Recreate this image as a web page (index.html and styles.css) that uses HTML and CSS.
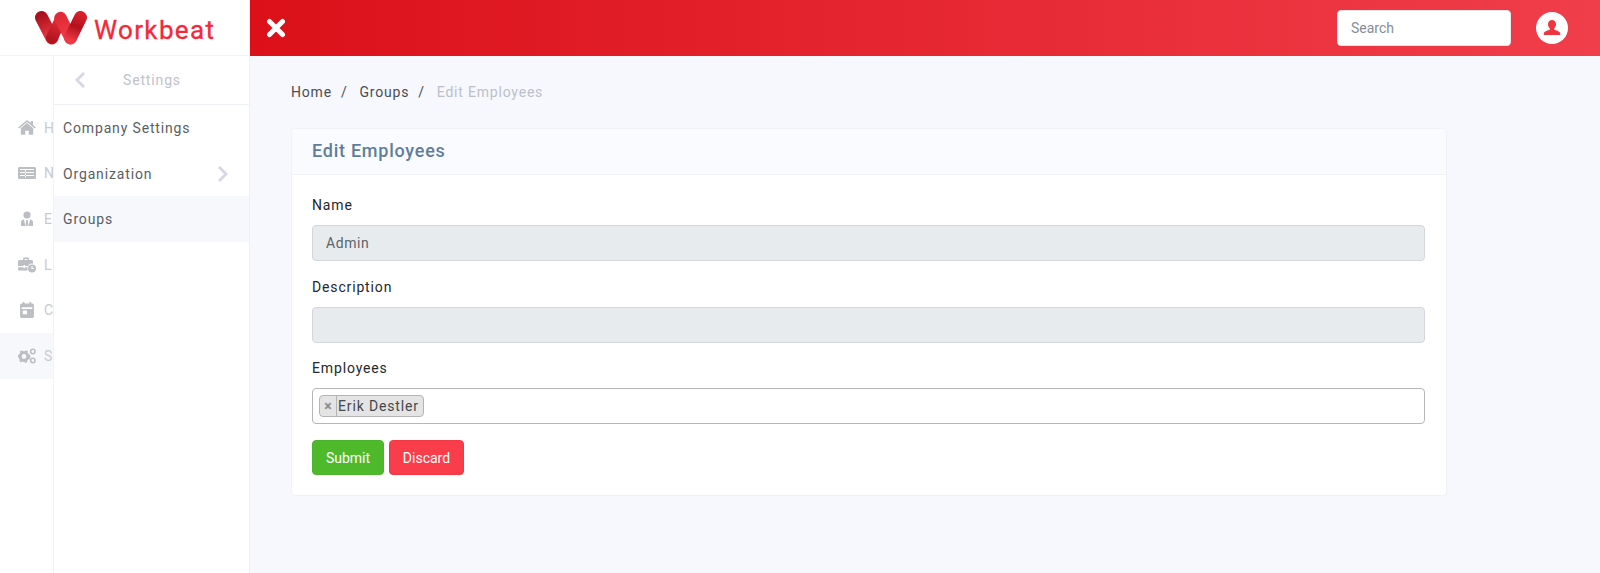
FILE: index.html
```html
<!DOCTYPE html>
<html lang="en">
<head>
<meta charset="utf-8">
<title>Edit Employees</title>
<link rel="stylesheet" href="styles.css">
</head>
<body>
<div class="app">
  <aside class="sidebar">
    <div class="brand">
      <svg class="logo" viewBox="0 0 52 34" width="52" height="34">
        <defs>
          <linearGradient id="lg1" gradientUnits="userSpaceOnUse" x1="6" y1="4" x2="17" y2="30"><stop offset="0" stop-color="#a8121e"/><stop offset="1" stop-color="#f83a48"/></linearGradient>
          <linearGradient id="lg2" gradientUnits="userSpaceOnUse" x1="17" y1="28" x2="26" y2="6"><stop offset="0" stop-color="#b5141f"/><stop offset="1" stop-color="#e8323f"/></linearGradient>
          <linearGradient id="lg3" gradientUnits="userSpaceOnUse" x1="26" y1="6" x2="36" y2="30"><stop offset="0" stop-color="#e02a38"/><stop offset="1" stop-color="#f83f4c"/></linearGradient>
          <linearGradient id="lg4" gradientUnits="userSpaceOnUse" x1="36" y1="30" x2="46" y2="4"><stop offset="0" stop-color="#f23a47"/><stop offset=".55" stop-color="#b0121d"/><stop offset="1" stop-color="#d8202d"/></linearGradient>
        </defs>
        <path d="M6.500 6.500 17 27" fill="none" stroke="url(#lg1)" stroke-width="13" stroke-linecap="round"/>
        <path d="M17 27 25.500 9" fill="none" stroke="url(#lg2)" stroke-width="12" stroke-linecap="round"/>
        <path d="M25.500 7 35.500 27" fill="none" stroke="url(#lg3)" stroke-width="12.500" stroke-linecap="round"/>
        <path d="M35.500 27 45.500 6.500" fill="none" stroke="url(#lg4)" stroke-width="13" stroke-linecap="round"/>
      </svg>
      <span class="brand-name">Workbeat</span>
    </div>
    <div class="nav">
      <ul class="rail">
        <li class="rail-item">
          <svg class="rail-icon" viewBox="0 0 18 16"><path d="M9 3 2.800 8.200V14c0 .4.3.7.7.7h3.700v-4h3.600v4h3.700c.4 0 .7-.3.7-.7V8.200zM17.800 7.200 15 4.900V1h-2.200v2.100L9 0 .2 7.200l1 1.200L9 2l7.800 6.400z"/></svg>
          <span>H</span>
        </li>
        <li class="rail-item">
          <svg class="rail-icon" viewBox="0 0 18 14"><path fill-rule="evenodd" d="M1.500 1h15c.8 0 1.500.7 1.500 1.500v9c0 .8-.7 1.500-1.500 1.500h-15C.7 13 0 12.300 0 11.500v-9C0 1.700.7 1 1.500 1zM2 3v.9h14V3zM2 6v.9h14V6zM2 9v.9h14V9zM7 4v7.500h.9V4z"/></svg>
          <span>N</span>
        </li>
        <li class="rail-item">
          <svg class="rail-icon" viewBox="0 0 14 16"><circle cx="7" cy="4" r="3.600"/><path d="M1 15v-3.500C1 9.800 2 8.800 4 8.600L5 13.500 6 15zM13 15v-3.500c0-1.700-1-2.700-3-2.900L9 13.500 8 15zM6.200 9h1.600l.6 5-1.400 1-1.400-1z"/></svg>
          <span>E</span>
        </li>
        <li class="rail-item">
          <svg class="rail-icon" viewBox="0 0 18 15"><path d="M5 2.500V1.300C5 .6 5.600 0 6.300 0h3.400C10.400 0 11 .6 11 1.300v1.200h2.500c.8 0 1.500.7 1.500 1.500V6.200a4.800 4.800 0 0 0-5 2.300H7V7.500H5.500v1H0V4c0-.8.7-1.500 1.500-1.500zM6.500 1.500v1h3v-1zM0 9.700h5.500v1H7v-1h2.600a4.800 4.800 0 0 0 .3 3.300H1.500C.7 13 0 12.300 0 11.500z"/><path fill-rule="evenodd" d="M14 7a4 4 0 1 1 0 8 4 4 0 0 1 0-8zm-.6 1.800v2.700h2.400v-1.100h-1.200V8.800z"/></svg>
          <span>L</span>
        </li>
        <li class="rail-item">
          <svg class="rail-icon" viewBox="0 0 13 15"><path fill-rule="evenodd" d="M2.500 0h1.700v1.500h4.600V0h1.700v1.500h1C12.300 1.500 13 2.200 13 3v10.500c0 .8-.7 1.500-1.500 1.500h-10C.7 15 0 14.300 0 13.500V3c0-.8.7-1.500 1.500-1.500h1zM1.500 5v1.500h10V5zM2.500 8v3.500h4V8z"/></svg>
          <span>C</span>
        </li>
        <li class="rail-item rail-active">
          <svg class="rail-icon" viewBox="0 0 18 16">
            <circle cx="6" cy="8.500" r="3.900" fill="none" stroke="#bcbec3" stroke-width="3"/>
            <circle cx="6" cy="8.500" r="5.500" fill="none" stroke="#bcbec3" stroke-width="1.800" stroke-dasharray="2.400 2.920"/>
            <circle cx="14.800" cy="3.500" r="2.200" fill="none" stroke="#bcbec3" stroke-width="1.500"/>
            <circle cx="14.800" cy="12.500" r="2.200" fill="none" stroke="#bcbec3" stroke-width="1.500"/>
          </svg>
          <span>S</span>
        </li>
      </ul>
      <div class="subnav">
        <div class="subnav-head">
          <svg class="chev-left" viewBox="0 0 12 18" width="12" height="18"><path d="M10 2 3 9l7 7" fill="none" stroke="#d5d7e2" stroke-width="2.800"/></svg>
          <span>Settings</span>
        </div>
        <ul class="subnav-list">
          <li class="subnav-item">Company Settings</li>
          <li class="subnav-item">Organization
            <svg class="chev-right" viewBox="0 0 12 18" width="12" height="18"><path d="M2 2l7 7-7 7" fill="none" stroke="#d5d7e2" stroke-width="2.800"/></svg>
          </li>
          <li class="subnav-item subnav-active">Groups</li>
        </ul>
      </div>
    </div>
  </aside>

  <header class="topbar">
    <svg class="close-icon" viewBox="0 0 20 20" width="20" height="20"><path d="M3.500 3.500l13 13M16.500 3.500l-13 13" stroke="#fff" stroke-width="5" stroke-linecap="round"/></svg>
    <div class="topbar-right">
      <input class="search" type="text" placeholder="Search">
      <span class="avatar">
        <svg viewBox="0 0 18 18" width="18" height="18"><path d="M9 1c2.400 0 4 1.800 4 4.300 0 1.700-.8 3.200-1.800 4.100v1.100c0 .6 4.800 1.100 5.800 3.300.4.900.2 2.200.2 2.200H.8s-.2-1.300.2-2.200c1-2.200 5.800-2.700 5.800-3.300V9.400C5.800 8.500 5 7 5 5.300 5 2.800 6.600 1 9 1z" fill="#f0343f"/></svg>
      </span>
    </div>
  </header>

  <main class="content">
    <nav class="crumbs">
      <a>Home</a><span class="sep">/</span><a>Groups</a><span class="sep">/</span><span class="crumb-current">Edit Employees</span>
    </nav>
    <section class="card">
      <h2 class="card-head">Edit Employees</h2>
      <form class="card-body">
        <div class="field">
          <label>Name</label>
          <input class="control" type="text" value="Admin" disabled>
        </div>
        <div class="field">
          <label>Description</label>
          <input class="control" type="text" disabled>
        </div>
        <div class="field field-last">
          <label>Employees</label>
          <div class="multi">
            <span class="tag"><span class="tag-x">×</span><span class="tag-text">Erik Destler</span></span>
          </div>
        </div>
        <div class="actions">
          <button type="button" class="btn btn-submit">Submit</button>
          <button type="button" class="btn btn-discard">Discard</button>
        </div>
      </form>
    </section>
  </main>
</div>
</body>
</html>
```
FILE: styles.css
```css
* { box-sizing: border-box; }
html, body { margin: 0; height: 100%; }
body {
  font-family: Roboto, "Liberation Sans", sans-serif;
  font-size: 14px;
  letter-spacing: .85px;
  color: #3c4043;
  background: #f6f8fd;
  overflow: hidden;
}
ul { list-style: none; margin: 0; padding: 0; }
.app {
  display: grid;
  grid-template-columns: 250px 1fr;
  grid-template-rows: 56px 1fr;
  height: 573px;
}
.sidebar {
  grid-row: 1 / 3;
  background: #fff;
  border-right: 1px solid #eff0f7;
  display: flex;
  flex-direction: column;
}
.brand {
  height: 56px;
  flex: none;
  display: flex;
  align-items: center;
  padding: 0 0 0 35px;
  gap: 7px;
  border-bottom: 1px solid #f2f3f9;
}
.logo { margin-top: 1px; flex: none; }
.brand-name {
  font-size: 26px;
  letter-spacing: 1.35px;
  color: #f5283a;
  -webkit-text-stroke: .3px #f5283a;
  margin-top: 4px;
}
.nav { flex: 1; display: flex; min-height: 0; }
.rail {
  width: 54px;
  flex: none;
  overflow: hidden;
  padding-top: 49px;
  border-right: 1px solid #f2f3f9;
}
.rail-item {
  height: 45.6px;
  display: flex;
  align-items: center;
  padding-left: 18px;
  color: #c8cacf;
  white-space: nowrap;
}
.rail-item span { margin-left: 8px; }
.rail-active { background: #f7f8fc; }
.rail-icon { width: 18px; height: 16px; fill: #bcbec3; flex: none; }
.subnav { flex: 1; min-width: 0; }
.subnav-head {
  height: 49px;
  display: flex;
  align-items: center;
  padding-left: 20px;
  border-bottom: 1px solid #eff0f7;
  color: #c0c2cb;
}
.subnav-head span { margin-left: 37px; }
.subnav-item {
  height: 45.7px;
  display: flex;
  align-items: center;
  justify-content: space-between;
  padding: 0 20px 0 9px;
  color: #5a5e64;
}
.subnav-active { background: #f7f8fc; }
.topbar {
  background: linear-gradient(90deg, #db1019 0%, #f03e4a 100%);
  display: flex;
  align-items: center;
  justify-content: space-between;
  padding: 0 32px 0 16px;
}
.topbar-right { display: flex; align-items: center; gap: 25px; }
.search {
  width: 174px;
  height: 36px;
  border: 1px solid #e4e6ea;
  border-radius: 4px;
  padding: 0 13px;
  font: inherit;
  letter-spacing: 0;
  background: #fff;
}
.search::placeholder { color: #868e96; opacity: 1; }
.avatar {
  width: 32px;
  height: 32px;
  border-radius: 50%;
  background: #fff;
  display: flex;
  align-items: center;
  justify-content: center;
}
.content { padding: 27px 0 0 41px; min-width: 0; }
.crumbs { display: flex; align-items: center; height: 17px; margin-bottom: 28px; color: #4a4d52; letter-spacing: .8px; }
.sep { margin: 0 12px 0 9px; }
.crumb-current { color: #bcbfc9; }
.card {
  width: 1156px;
  background: #fff;
  border: 1px solid #f1f2f8;
  border-radius: 4px;
}
.card-head {
  margin: 0;
  height: 46px;
  padding: 0 20px 3px;
  display: flex;
  align-items: center;
  font-size: 18px;
  font-weight: 500;
  letter-spacing: .75px;
  color: #5f7d9c;
  background: #fafbff;
  border-bottom: 1px solid #f1f2f8;
  border-radius: 4px 4px 0 0;
}
.card-body { padding: 22px 21px 20px 20px; }
.field { margin-bottom: 17.5px; }
.field-last { margin-bottom: 16px; }
.field label {
  display: block;
  height: 17px;
  line-height: 17px;
  margin-bottom: 11px;
  color: #24272b;
}
.control {
  display: block;
  width: 100%;
  height: 36px;
  padding: 0 13px;
  font: inherit;
  letter-spacing: .6px;
  color: #5c6268;
  background: #e8ebee;
  border: 1px solid #d3d7dc;
  border-radius: 4px;
  opacity: 1;
  -webkit-text-fill-color: #5c6268;
}
.multi {
  height: 36px;
  padding: 6px;
  background: #fff;
  border: 1px solid #b4b6ba;
  border-radius: 4px;
  display: flex;
  align-items: flex-start;
}
.tag {
  height: 22px;
  display: inline-flex;
  align-items: stretch;
  background: #e4e4e4;
  border: 1px solid #b4b4b4;
  border-radius: 4px;
  color: #45484c;
  line-height: 20px;
}
.tag-x {
  width: 17px;
  text-align: center;
  color: #8b8d90;
  font-weight: 700;
  letter-spacing: 0;
  border-right: 1px solid #b4b4b4;
}
.tag-text { padding: 0 4px 0 1px; }
.actions { display: flex; gap: 5px; }
.btn {
  height: 35px;
  border-radius: 4px;
  font: inherit;
  letter-spacing: 0;
  color: #fff;
  padding: 0;
}
.btn-submit { width: 72px; background: #4fb92c; border: 1px solid #4ab52a; }
.btn-discard { width: 75px; background: #fa3d4a; border: 1px solid #f53643; }
```
